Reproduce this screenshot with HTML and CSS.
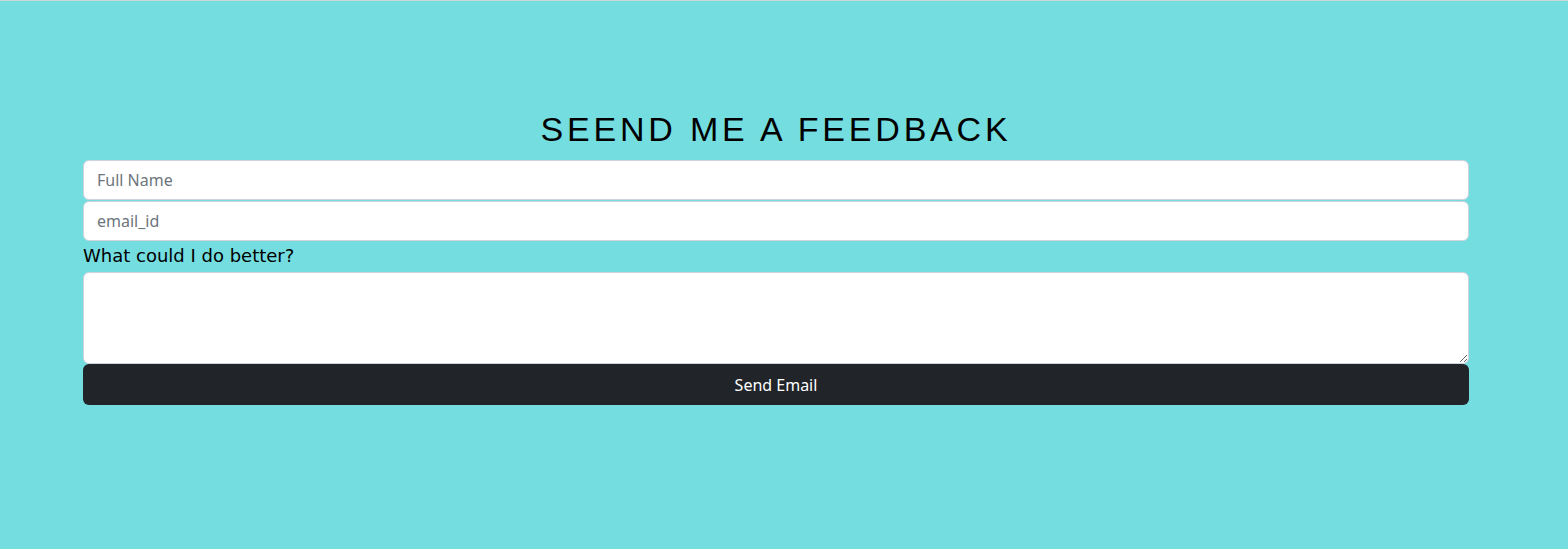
FILE: index.html
```html
<!DOCTYPE html>
<html>
<head>
<meta charset="utf-8">
<link rel="stylesheet" href="styles.css">
</head>
<body>
<main class="page">
  <form class="feedback">
    <h1 class="title">SEEND ME A FEEDBACK</h1>
    <input class="field" type="text" placeholder="Full Name">
    <input class="field" type="email" placeholder="email_id">
    <label class="label">What could I do better?</label>
    <textarea class="field area"></textarea>
    <button class="send" type="button">Send Email</button>
  </form>
</main>
</body>
</html>
```
FILE: styles.css
```css
html, body {
  margin: 0;
  padding: 0;
}
body {
  background: #ffffff;
  font-family: "Noto Sans", "DejaVu Sans", sans-serif;
}
.page {
  background: #74dddf;
  border-top: 1px solid #c8d6d6;
  padding: 107px 99px 0 83px;
  box-sizing: border-box;
  height: 549px;
}
.feedback {
  display: flex;
  flex-direction: column;
}
.title {
  margin: 0 0 9px 0;
  text-align: center;
  font-family: "Liberation Sans", sans-serif;
  font-weight: 400;
  font-size: 34px;
  line-height: 43px;
  letter-spacing: 3.8px;
  color: #000;
}
.field {
  height: 40px;
  box-sizing: border-box;
  border: 1px solid #ced4da;
  border-radius: 6px;
  background: #fff;
  padding: 6px 13px;
  font-family: "Noto Sans", sans-serif;
  font-size: 16px;
  color: #212529;
  margin: 0 0 1px 0;
}
.field::placeholder {
  color: #6c757d;
}
.label {
  margin: 3px 0 5px 0;
  font-family: "DejaVu Sans", sans-serif;
  font-size: 18px;
  line-height: 22px;
  color: #000;
}
.area {
  height: 92px;
  resize: vertical;
  margin: 0;
}
.send {
  height: 41px;
  border: none;
  border-radius: 6px;
  background: #212529;
  color: #fff;
  font-family: "Noto Sans", sans-serif;
  font-size: 16px;
}
```
